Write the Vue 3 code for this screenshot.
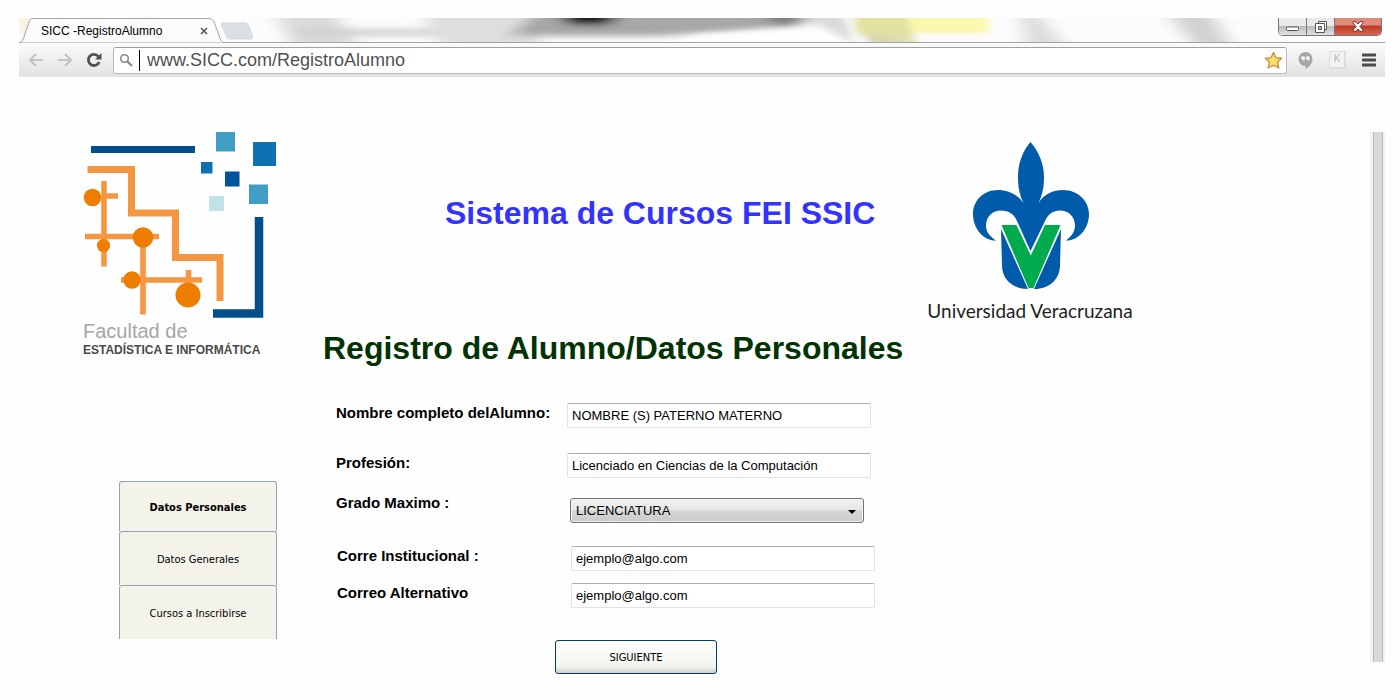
<script setup>
import { ref } from 'vue'

const url = ref('www.SICC.com/RegistroAlumno')
const nombre = ref('NOMBRE (S) PATERNO MATERNO')
const profesion = ref('Licenciado en Ciencias de la Computación')
const grado = ref('LICENCIATURA')
const correo = ref('ejemplo@algo.com')
const alterno = ref('ejemplo@algo.com')
</script>

<template>
  <div class="window">
    <header class="tabstrip">
      <svg class="glass" viewBox="0 0 1366 24" preserveAspectRatio="none" aria-hidden="true">
        <defs>
          <filter id="soft" x="-20%" y="-60%" width="140%" height="220%"><feGaussianBlur stdDeviation="9 3" /></filter>
          <filter id="edge" x="-20%" y="-60%" width="140%" height="220%"><feGaussianBlur stdDeviation="4 2" /></filter>
        </defs>
        <rect width="1366" height="24" fill="#fcfcfc" />
        <g filter="url(#soft)">
          <path d="M255 -8H315L340 32H275Z" fill="#dadada" />
          <rect x="280" y="11" width="210" height="7" fill="#cfcfcf" />
          <path d="M400 -8H520V32H425Z" fill="#dedede" />
          <path d="M520 -8H800L780 8 700 14 640 18H490Z" fill="#a9a7a6" />
          <path d="M535 -10H605L590 7H550Z" fill="#111" />
          <path d="M850 -8H780L800 8 850 32H890Z" fill="#d8d8d8" />
          <ellipse cx="765" cy="-1" rx="16" ry="8" fill="#777" />
          <path d="M1000 -8H1015L1050 32H1010Z" fill="#dadada" />
          <path d="M1145 -8H1190L1215 32H1180Z" fill="#d2d2d2" />
        </g>
        <g filter="url(#edge)">
          <path d="M680 16L800 10 840 30H640Z" fill="#fff" opacity=".7" />
          <path d="M836 -5H850V30H836L822 -5Z" fill="#fff" opacity=".8" />
          <rect x="836" y="-5" width="133" height="20" fill="#faf8ae" />
          <path d="M836 -5H886L900 30H860L838 14H836Z" fill="#d9d99a" opacity=".7" />
        </g>
        <rect y="-3" width="16" height="20" fill="#f6e9c9" opacity=".6" filter="url(#edge)" />
      </svg>
      <svg class="tab-shape" width="250" height="25" viewBox="0 0 250 25" aria-hidden="true">
        <path d="M0 24.500C3 24.500 4 22 5 19L10 4C11 1 12 .5 15 .5H189C193 .5 194 2 195 4L201 20C202 23 203 24.500 207 24.500" fill="#fbfbfb" stroke="#a3a3a3" />
        <path d="M204 5H225C228 5 229 6 230 8L233 17C234 20 233 21 231 21H213C209 21 208 20 207 17L203 8C202 6 202 5 204 5Z" fill="#dce0e5" stroke="#d2d6dc" />
      </svg>
      <div class="tab">
        <span>SICC -RegistroAlumno</span>
        <button class="plain" aria-label="Cerrar pestaña">
          <svg width="8" height="8" viewBox="0 0 8 8"><path d="M1 1L7 7M7 1L1 7" stroke="#555" stroke-width="1.600" /></svg>
        </button>
      </div>
      <div class="controls">
        <button aria-label="Minimizar"><svg width="13" height="8" viewBox="0 0 13 8"><rect x=".5" y="4" width="12" height="3.500" rx="1" fill="#fff" stroke="#555" /></svg></button>
        <button aria-label="Restaurar"><svg width="12" height="12" viewBox="0 0 12 12"><path d="M3.500 .5H11.500V8.500H3.500Z" fill="#fff" stroke="#555" /><path d="M.5 2.500H9.500V11.500H.5Z" fill="#fff" stroke="#555" /><path d="M3.500 5.500H6.500V8.500H3.500Z" fill="#bbb" stroke="#555" /></svg></button>
        <button class="close" aria-label="Cerrar"><svg width="12" height="11" viewBox="0 0 12 11"><path d="M1 .7H4L6 3 8 .7H11V2L8 5.500 11 9V10.300H8L6 8 4 10.300H1V9L4 5.500 1 2Z" fill="#fff" stroke="#6c3b38" /></svg></button>
      </div>
    </header>

    <div class="toolbar">
      <button class="plain" aria-label="Atrás"><svg width="16" height="14" viewBox="0 0 16 14"><path d="M8 1L2 7 8 13M2 7H15" fill="none" stroke="#c3c3c3" stroke-width="2.200" /></svg></button>
      <button class="plain" aria-label="Adelante"><svg width="16" height="14" viewBox="0 0 16 14"><path d="M8 1L14 7 8 13M14 7H1" fill="none" stroke="#c3c3c3" stroke-width="2.200" /></svg></button>
      <button class="plain" aria-label="Recargar"><svg width="16" height="16" viewBox="0 0 16 16"><path d="M12.300 4.300A5.600 5.600 0 1 0 13.200 10" fill="none" stroke="#505050" stroke-width="2.800" /><path d="M15.500 1V7.500H9Z" fill="#505050" /></svg></button>
      <div class="omnibox">
        <svg width="15" height="15" viewBox="0 0 15 15" aria-hidden="true"><circle cx="5.500" cy="5.500" r="3.800" fill="none" stroke="#8b8b8b" stroke-width="1.600" /><path d="M8.500 8.500L13 13" stroke="#8b8b8b" stroke-width="2.400" /></svg>
        <span class="caret"></span>
        <input v-model="url" type="text" aria-label="Dirección" />
        <svg width="19" height="19" viewBox="0 0 19 19" aria-hidden="true"><path d="M9.500 1.500L12 6.800 17.600 7.300 13.500 11.200 14.800 17 9.500 14.200 4.200 17 5.500 11.200 1.400 7.300 7 6.800Z" fill="#fbdf6c" stroke="#c9953c" stroke-width="1.400" stroke-linejoin="round" /></svg>
      </div>
      <div class="extensions">
        <svg width="15" height="17" viewBox="0 0 15 17" aria-hidden="true"><path d="M7.500 0A7 7 0 0 0 7.500 14V17C11 15 14.500 11.500 14.500 7A7 7 0 0 0 7.500 0Z" fill="#a6a6a6" /><path d="M3.500 4.500H6.800V7.500L5.500 9.500V7.500H3.500ZM8.200 4.500H11.500V7.500L10.200 9.500V7.500H8.200Z" fill="#fff" /></svg>
        <span class="key">K</span>
        <button class="plain" aria-label="Menú"><svg width="14" height="14" viewBox="0 0 14 14"><path d="M1 2H13M1 7H13M1 12H13" stroke="#4b4b4b" stroke-width="3" stroke-linecap="round" /></svg></button>
      </div>
    </div>

    <div class="page">
      <aside class="left">
        <figure class="faculty">
          <svg width="194" height="188" viewBox="13 10 194 188" aria-hidden="true">
            <path d="M21 29.500H125" stroke="#004e8c" stroke-width="7" />
            <path d="M189 97V193.500H143" fill="none" stroke="#004e8c" stroke-width="8.500" />
            <g fill="#409ec5"><rect x="146" y="12" width="19" height="19.500" /><rect x="179" y="64.500" width="19" height="19.500" /></g>
            <g fill="#0f71b1"><rect x="183" y="22" width="23" height="24" /><rect x="131" y="42" width="11.500" height="11.500" /></g>
            <rect x="155" y="51.500" width="14.500" height="15" fill="#00549b" />
            <rect x="139" y="76" width="15" height="15" fill="#c0e3e9" />
            <g fill="none" stroke="#f59740">
              <path d="M17.500 49.500H61.500V93H105.500V137.500H150V181" stroke-width="7" />
              <path d="M34 61V146.500M34 76H48M15 116.500H89M73 116V194.500M51 160H132M118.500 150V172" stroke-width="5.600" />
            </g>
            <g fill="#ef7d00"><circle cx="22.500" cy="77.500" r="8.800" /><circle cx="73" cy="117.500" r="10.300" /><circle cx="33.500" cy="125.500" r="6.600" /><circle cx="62" cy="160" r="8.700" /><circle cx="118" cy="175" r="12.500" /></g>
          </svg>
          <figcaption><span>Facultad de</span><strong>ESTADÍSTICA E INFORMÁTICA</strong></figcaption>
        </figure>
        <nav>
          <a href="#datos-personales" class="active">Datos Personales</a>
          <a href="#datos-generales">Datos Generales</a>
          <a href="#cursos">Cursos a Inscribirse</a>
        </nav>
      </aside>

      <main>
        <p class="system">Sistema de Cursos FEI SSIC</p>
        <h1>Registro de Alumno/Datos Personales</h1>
        <form @submit.prevent>
          <div class="row">
            <label for="nombre">Nombre completo delAlumno:</label>
            <input id="nombre" v-model="nombre" type="text" />
          </div>
          <div class="row">
            <label for="profesion">Profesión:</label>
            <input id="profesion" v-model="profesion" type="text" />
          </div>
          <div class="row choice">
            <label for="grado">Grado Maximo :</label>
            <div class="select">
              <select id="grado" v-model="grado"><option>LICENCIATURA</option></select>
              <svg width="8" height="4" viewBox="0 0 8 4" aria-hidden="true"><path d="M0 0H8L4 4Z" /></svg>
            </div>
          </div>
          <div class="contact">
            <div class="row">
              <label for="correo">Corre Institucional :</label>
              <input id="correo" v-model="correo" type="text" />
            </div>
            <div class="row">
              <label for="alterno">Correo Alternativo</label>
              <input id="alterno" v-model="alterno" type="text" />
            </div>
          </div>
          <button class="next" type="submit">SIGUIENTE</button>
        </form>
      </main>

      <figure class="university">
        <svg width="128" height="152" viewBox="56 10 128 152" aria-hidden="true">
          <g fill="#005baa">
            <path d="M120.500 12C112 22 108 34 108 47C108 58 110 66 113.500 73C107 64 98 60 88 60C73 60 63 71 63 84C63 99 74 111 86 110.500C79 106 76 101 76 96C76 86 83 80.500 91 80.500C99 80.500 104 84 107 91L120.500 121L135 91C138 84 143 80.500 150 80.500C158 80.500 165 86 165 96C165 101 162 106 156 110.500C168 111 179 99 179 84C179 71 168 60 153 60C143 60 134 64 128.500 73C132 66 134 58 134 47C134 34 129 22 120.500 12Z" />
            <path d="M91 99L118 159C102 159 92 149 92 135Z" /><path d="M151 99L124 159C140 159 150 149 150 135Z" />
          </g>
          <path d="M91.500 95H106.500L120.800 125.500L135 95H150.500L123.500 158H118.500Z" fill="#00ab4e" />
        </svg>
        <figcaption>Universidad Veracruzana</figcaption>
      </figure>

      <div class="scrollbar" aria-hidden="true"></div>
    </div>
  </div>
</template>

<style>
body { background: #fefefe; }
</style>

<style scoped>
.window { padding: 18px 15px 0 19px; font-family: "Liberation Sans", Arial, sans-serif; color: #000; }
figure, p, h1 { margin: 0; }
svg { display: block; flex: none; }
button, input, select { font-family: inherit; margin: 0; }
.plain { display: flex; padding: 0; border: 0; background: none; }

.tabstrip { position: relative; display: flex; justify-content: space-between; height: 24px; border-bottom: 1px solid #a3a3a3; }
.glass { position: absolute; inset: 0; width: 100%; height: 24px; }
.tab-shape { position: absolute; left: 0; top: 0; }
.tab { position: relative; display: flex; align-items: center; justify-content: space-between; width: 167px; padding: 2px 0 0 22px; font-size: 12px; }
.controls { position: relative; display: flex; height: 18px; margin-right: 3px; border: 1px solid #777; border-top: 0; border-radius: 0 0 5px 5px; overflow: hidden; box-sizing: border-box; }
.controls button { display: flex; align-items: center; justify-content: center; box-sizing: content-box; width: 27px; padding: 0; border: 0; border-right: 1px solid #777; background: linear-gradient(#eaeaea 45%, #bbb8be 50%, #e3e2e6); }
.controls .close { width: 46px; border-right: 0; background: linear-gradient(#e08c7c 40%, #bf3a24 50%, #d9664e); }

.toolbar { display: flex; align-items: center; height: 34px; padding: 0 9px 0 9px; gap: 13px; background: linear-gradient(#fbfbfb, #e2e2e2); }
.omnibox { display: flex; flex: 1; align-items: center; height: 25px; margin-left: -2px; padding: 0 3px 0 5px; border: 1px solid #bababa; border-top-color: #9f9f9f; border-radius: 3px; background: #fff; }
.caret { width: 1px; height: 21px; margin: 0 7px 0 5px; background: #000; }
.omnibox input { flex: 1; min-width: 0; padding: 0; border: 0; outline: 0; background: none; color: #505050; font-size: 18px; line-height: 22px; }
.extensions { display: flex; align-items: center; gap: 16px; margin-left: -2px; }
.key { width: 14px; height: 15px; border: 1px solid #ddd; border-width: 1px 2px 2px 1px; background: #f2f2f2; color: #b5b5b5; font-size: 10px; line-height: 14px; text-align: center; }

.page { display: grid; grid-template-columns: 194px minmax(0, 581px) 208px minmax(0, 1fr); padding-left: 64px; }
.left { padding-top: 53px; }
.faculty figcaption { display: flex; flex-direction: column; padding-top: 2px; white-space: nowrap; }
.faculty span { color: #a5a5a5; font-size: 20px; line-height: 22px; }
.faculty strong { color: #4a4a4a; font-size: 12px; line-height: 16px; }
nav { display: flex; flex-direction: column; margin: 123px 0 0 36px; }
nav a { display: flex; align-items: center; justify-content: center; box-sizing: border-box; height: 54px; padding-top: 1px; border: 1px solid #94a4ae; border-bottom: 0; border-radius: 3px 3px 0 0; background: #f3f3ea; color: #000; font-family: "DejaVu Sans Condensed", "DejaVu Sans", sans-serif; font-size: 11px; text-decoration: none; }
nav .active { height: 50px; font-weight: bold; }

main { padding-top: 118px; margin-left: 46px; margin-right: -46px; }
.system { padding-left: 122px; color: #33f; font-size: 32px; font-weight: bold; line-height: 36px; white-space: nowrap; }
h1 { margin-top: 99px; color: #030; font-size: 32px; line-height: 36px; white-space: nowrap; }
form { display: flex; flex-direction: column; gap: 25px; padding: 37px 0 0 13px; }
.row { display: grid; grid-template-columns: 231px minmax(0, 304px); align-items: start; }
label { font-size: 15px; font-weight: bold; line-height: 20px; white-space: nowrap; }
.row input { box-sizing: border-box; width: 100%; height: 25px; padding: 0 4px; border: 1px solid #dfe2e8; border-top-color: #abadb3; border-radius: 2px; background: #fff; font-size: 13px; }
.choice { grid-template-columns: 234px minmax(0, 294px); height: 30px; margin-top: -10px; }
.select { position: relative; align-self: end; }
select { display: block; appearance: none; box-sizing: border-box; width: 100%; height: 25px; padding: 0 5px; border: 1px solid #707070; border-radius: 3px; background: linear-gradient(#f2f2f2, #e6e6e6 48%, #d6d6d6 52%, #cbcbcb); box-shadow: inset 0 0 0 1px #f4f4f4; color: #000; font-size: 13px; }
.select svg { position: absolute; right: 8px; top: 12px; }
.contact { display: flex; flex-direction: column; gap: 12px; margin-top: -2px; padding-left: 1px; }
.contact .row { grid-template-columns: 234px minmax(0, 304px); }
.next { width: 162px; height: 34px; margin: 7px 0 0 219px; border: 1px solid #003c74; border-radius: 3px; background: linear-gradient(#fff, #f3f3ee 80%, #d6d0c5); color: #000; font-family: "DejaVu Sans Condensed", "DejaVu Sans", sans-serif; font-size: 11px; }

.university { display: flex; flex-direction: column; align-items: center; gap: 8px; padding-top: 63px; margin-left: 68px; margin-right: -68px; }
.university figcaption { color: #222; font-family: Lato, sans-serif; font-size: 19px; line-height: 22px; white-space: nowrap; }
.scrollbar { justify-self: end; width: 8px; margin: 55px 2px 12px; border: solid #b9b9b9; border-width: 0 1px; background: #d9d9d9; box-shadow: -3px 0 #f1f1f1, 2px 0 #f1f1f1; }
</style>
